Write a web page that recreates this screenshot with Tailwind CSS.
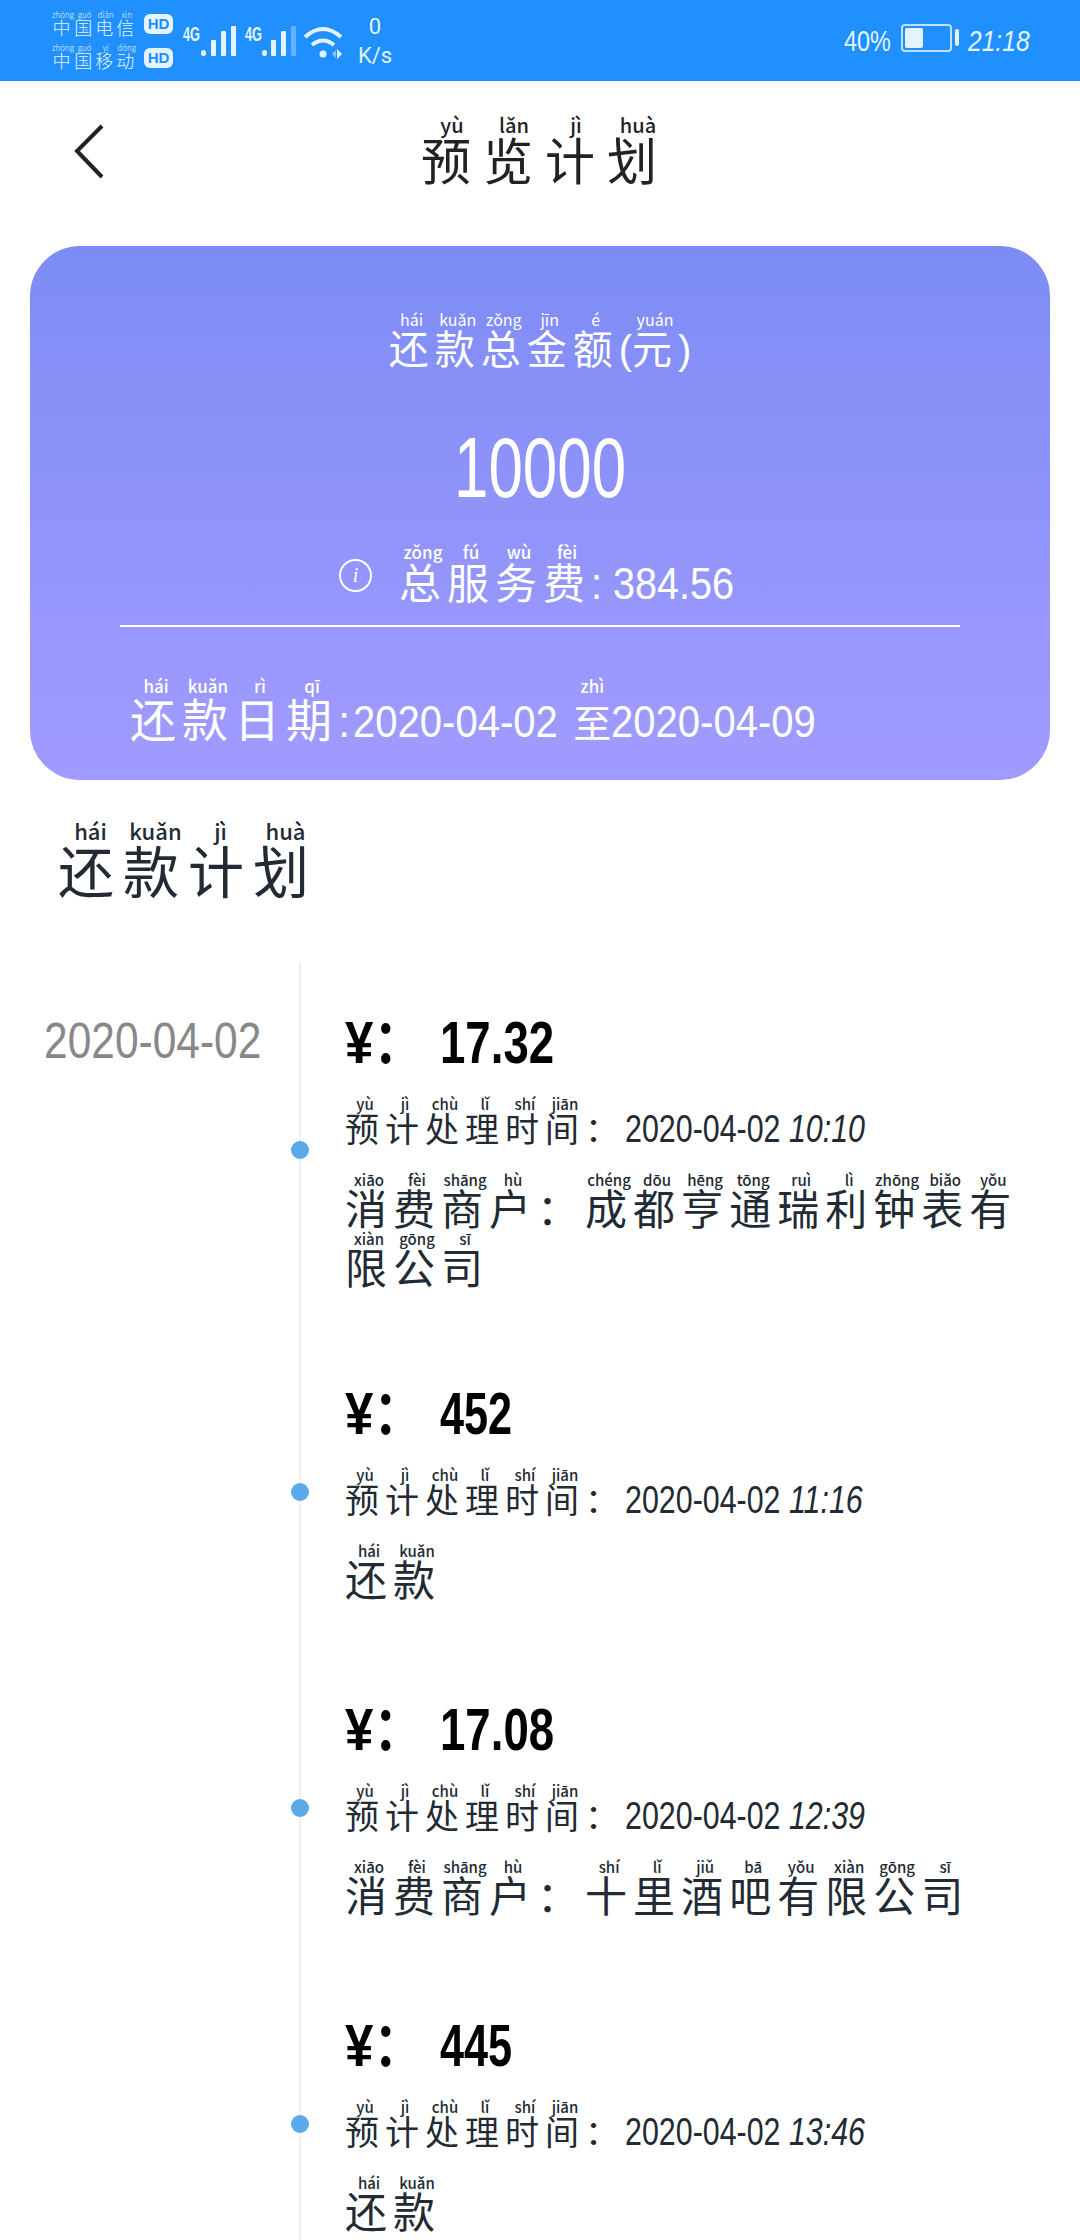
<!DOCTYPE html>
<html lang="zh-CN">
<head>
    <meta charset="UTF-8">
    <meta name="viewport" content="width=device-width, initial-scale=1.0">
    <title>预览计划</title>
    <script src="https://cdn.jsdelivr.net/npm/@tailwindcss/browser@4"></script>
</head>
<body class="bg-white w-[1080px] h-[2240px] overflow-hidden font-['Noto_Sans_CJK_SC','Liberation_Sans',sans-serif]">
    <!-- Status bar -->
    <div class="h-[81px] bg-[#2090ff] flex items-center text-[#e3f3ff] pl-[52px] pr-[50px]">
        <div class="flex flex-col gap-[5px] w-[92px] font-light">
            <div class="text-[18px] leading-[28px] tracking-[3px] h-[28px] [&_rt]:text-[8px] [&_rt]:tracking-normal"><ruby>中<rt>zhōng</rt></ruby><ruby>国<rt>guó</rt></ruby><ruby>电<rt>diàn</rt></ruby><ruby>信<rt>xìn</rt></ruby></div>
            <div class="text-[18px] leading-[28px] tracking-[3px] h-[28px] [&_rt]:text-[8px] [&_rt]:tracking-normal"><ruby>中<rt>zhōng</rt></ruby><ruby>国<rt>guó</rt></ruby><ruby>移<rt>yí</rt></ruby><ruby>动<rt>dòng</rt></ruby></div>
        </div>
        <div class="flex flex-col gap-[14px] w-[29px]">
            <span class="h-[20px] rounded-[6px] bg-[#e3f3ff] text-[#2090ff] text-[15px] leading-[20px] font-bold text-center font-['Liberation_Sans',sans-serif]">HD</span>
            <span class="h-[20px] rounded-[6px] bg-[#e3f3ff] text-[#2090ff] text-[15px] leading-[20px] font-bold text-center font-['Liberation_Sans',sans-serif]">HD</span>
        </div>
        <svg width="170" height="60" viewBox="0 0 170 60" fill="#e3f3ff" class="ml-[5px]">
            <text x="5" y="30" font-family="Liberation Sans" font-size="21" font-weight="700" textLength="17" lengthAdjust="spacingAndGlyphs">4G</text>
            <rect x="23" y="39" width="5" height="6" rx="2.5"/><rect x="33" y="29" width="5" height="16" rx="1"/><rect x="43" y="20" width="5" height="25" rx="1"/><rect x="53" y="15" width="5" height="30" rx="1"/>
            <text x="67" y="30" font-family="Liberation Sans" font-size="21" font-weight="700" textLength="17" lengthAdjust="spacingAndGlyphs">4G</text>
            <rect x="84" y="39" width="5" height="6" rx="2.5"/><rect x="93" y="29" width="5" height="16" rx="1"/><rect x="103" y="20" width="5" height="25" rx="1"/><rect x="113" y="15" width="5" height="30" rx="1" opacity=".35"/>
            <g fill="none" stroke="#e3f3ff" stroke-width="4"><path d="M127 26q18-16 36 0"/><path d="M134 34q11-9 22 0"/></g>
            <circle cx="145" cy="43" r="3.5"/><path d="M154 43l4-4v8z" opacity=".5"/><path d="M159 38l5 5-5 5z"/>
        </svg>
        <div class="w-[50px] ml-[2px] text-center text-[22px] leading-[29px] font-['Roboto',sans-serif]">0<br><span class="whitespace-nowrap">K/s</span></div>
        <div class="ml-auto flex items-center font-['Liberation_Sans',sans-serif] text-[30px]">
            <span class="inline-block w-[47px] origin-left scale-x-[.78] whitespace-nowrap">40%</span>
            <span class="ml-[10px] w-[51px] h-[28px] rounded-[4px] border-2 border-[#bfe0ff] p-[2px] -mt-[6px]"><span class="block w-[18px] h-full bg-[#e3f3ff] rounded-[2px]"></span></span>
            <span class="ml-[3px] w-[4px] h-[17px] rounded-[2px] bg-[#e3f3ff] -mt-[6px]"></span>
            <span class="ml-[9px] inline-block w-[62px] origin-left scale-x-[.82] italic whitespace-nowrap">21:18</span>
        </div>
    </div>

    <!-- Nav -->
    <div class="h-[165px] relative flex justify-center">
        <svg width="30" height="56" viewBox="0 0 30 56" fill="none" stroke="#222" stroke-width="4" class="absolute left-[74px] top-[43px]"><path d="M28 2L3 27l25 26"/></svg>
        <div class="pt-[40px] pl-[10px] text-[50px] leading-[74px] tracking-[12px] text-[#222] [&_rt]:text-[20px] [&_rt]:tracking-normal [&_rt]:font-medium"><ruby>预<rt>yù</rt></ruby><ruby>览<rt>lǎn</rt></ruby><ruby>计<rt>jì</rt></ruby><ruby>划<rt>huà</rt></ruby></div>
    </div>

    <!-- Summary card -->
    <div class="mx-[30px] h-[534px] rounded-[50px] bg-gradient-to-b from-[#7d8cf5] to-[#a29bff] text-white flex flex-col items-center">
        <div class="mt-[65px] text-[40px] leading-[56px] tracking-[6px] [&_rt]:text-[16px] [&_rt]:tracking-normal"><ruby>还<rt>hái</rt></ruby><ruby>款<rt>kuǎn</rt></ruby><ruby>总<rt>zǒng</rt></ruby><ruby>金<rt>jīn</rt></ruby><ruby>额<rt>é</rt></ruby><span class="font-['Liberation_Sans',sans-serif] tracking-normal">(</span><ruby>元<rt>yuán</rt></ruby><span class="font-['Liberation_Sans',sans-serif] tracking-normal">)</span></div>
        <div class="mt-[46px] w-[172px] text-[86px] leading-[86px] origin-left scale-x-[.72] font-['Liberation_Sans',sans-serif]">10000</div>
        <div class="mt-[34px] flex items-end">
            <span class="w-[33px] h-[33px] mb-[22px] mr-[27px] rounded-full border-2 border-white text-[20px] leading-[28px] text-center italic font-['Liberation_Serif',serif]">i</span>
            <div class="text-[42px] leading-[60px] tracking-[6px] whitespace-nowrap [&_rt]:text-[17px] [&_rt]:tracking-normal [&_rt]:font-medium"><ruby>总<rt>zǒng</rt></ruby><ruby>服<rt>fú</rt></ruby><ruby>务<rt>wù</rt></ruby><ruby>费<rt>fèi</rt></ruby><span class="inline-block w-[150px] origin-left scale-x-[.9] text-[44px] tracking-normal font-['Liberation_Sans',sans-serif]">: 384.56</span></div>
        </div>
        <div class="w-[840px] h-[2px] bg-white mt-[11px]"></div>
        <div class="w-[840px] mt-[51px] pl-[10px] text-[46px] leading-[60px] tracking-[6px] whitespace-nowrap [&_rt]:text-[17px] [&_rt]:tracking-normal [&_rt]:font-medium"><ruby>还<rt>hái</rt></ruby><ruby>款<rt>kuǎn</rt></ruby><ruby>日<rt>rì</rt></ruby><ruby>期<rt>qī</rt></ruby><span class="font-['Liberation_Sans',sans-serif] tracking-normal text-[44px]">:</span><span class="ml-[3px] inline-block w-[220px] origin-left scale-x-[.91] text-[44px] tracking-normal font-['Liberation_Sans',sans-serif]">2020-04-02</span><ruby class="text-[38px] tracking-normal">至<rt>zhì</rt></ruby><span class="inline-block w-[205px] origin-left scale-x-[.91] text-[44px] tracking-normal font-['Liberation_Sans',sans-serif]">2020-04-09</span></div>
    </div>

    <!-- Heading -->
    <div class="mt-[40px] pl-[58px] text-[56px] leading-[80px] tracking-[9px] text-[#222a33] [&_rt]:text-[22px] [&_rt]:tracking-normal [&_rt]:font-medium"><ruby>还<rt>hái</rt></ruby><ruby>款<rt>kuǎn</rt></ruby><ruby>计<rt>jì</rt></ruby><ruby>划<rt>huà</rt></ruby></div>

    <!-- Timeline -->
    <div class="mt-[53px] flex">
        <div class="w-[299px] pl-[44px] pt-[49px] text-[50px] leading-[60px] text-[#888] font-['Liberation_Sans',sans-serif]"><span class="inline-block w-[217px] origin-left scale-x-[.85] whitespace-nowrap">2020-04-02</span></div>
        <div class="relative flex-1 border-l-2 border-[#eef0f2] pl-[44px] pr-[30px] text-[#222a33] [&_rt]:text-[15px] [&_rt]:tracking-normal [&_rt]:font-medium">
            <div class="pt-[51px] h-[371px] relative">
                <span class="absolute -left-[54px] top-[179px] w-[18px] h-[18px] rounded-full bg-[#5aa9ea]"></span>
                <div class="flex items-baseline text-[60px] leading-[60px] font-bold text-black font-['Liberation_Sans',sans-serif]"><span class="w-[95px] origin-left scale-x-[.85] whitespace-nowrap">¥：</span><span class="w-[114px] origin-left scale-x-[.76] whitespace-nowrap">17.32</span></div>
                <div class="mt-[23px] text-[34px] leading-[50px] tracking-[6px] whitespace-nowrap"><ruby>预<rt>yù</rt></ruby><ruby>计<rt>jì</rt></ruby><ruby>处<rt>chù</rt></ruby><ruby>理<rt>lǐ</rt></ruby><ruby>时<rt>shí</rt></ruby><ruby>间<rt>jiān</rt></ruby>：<span class="inline-block w-[241px] origin-left scale-x-[.8] font-['Liberation_Sans',sans-serif] tracking-normal text-[38px]">2020-04-02 <i>10:10</i></span></div>
                <div class="mt-[18px] text-[42px] leading-[56px] tracking-[6px]"><ruby>消<rt>xiāo</rt></ruby><ruby>费<rt>fèi</rt></ruby><ruby>商<rt>shāng</rt></ruby><ruby>户<rt>hù</rt></ruby>：<ruby>成<rt>chéng</rt></ruby><ruby>都<rt>dōu</rt></ruby><ruby>亨<rt>hēng</rt></ruby><ruby>通<rt>tōng</rt></ruby><ruby>瑞<rt>ruì</rt></ruby><ruby>利<rt>lì</rt></ruby><ruby>钟<rt>zhōng</rt></ruby><ruby>表<rt>biǎo</rt></ruby><ruby>有<rt>yǒu</rt></ruby><ruby>限<rt>xiàn</rt></ruby><ruby>公<rt>gōng</rt></ruby><ruby>司<rt>sī</rt></ruby></div>
            </div>
            <div class="pt-[51px] h-[316px] relative">
                <span class="absolute -left-[54px] top-[150px] w-[18px] h-[18px] rounded-full bg-[#5aa9ea]"></span>
                <div class="flex items-baseline text-[60px] leading-[60px] font-bold text-black font-['Liberation_Sans',sans-serif]"><span class="w-[95px] origin-left scale-x-[.85] whitespace-nowrap">¥：</span><span class="w-[72px] origin-left scale-x-[.72] whitespace-nowrap">452</span></div>
                <div class="mt-[23px] text-[34px] leading-[50px] tracking-[6px] whitespace-nowrap"><ruby>预<rt>yù</rt></ruby><ruby>计<rt>jì</rt></ruby><ruby>处<rt>chù</rt></ruby><ruby>理<rt>lǐ</rt></ruby><ruby>时<rt>shí</rt></ruby><ruby>间<rt>jiān</rt></ruby>：<span class="inline-block w-[241px] origin-left scale-x-[.8] font-['Liberation_Sans',sans-serif] tracking-normal text-[38px]">2020-04-02 <i>11:16</i></span></div>
                <div class="mt-[18px] text-[42px] leading-[56px] tracking-[6px]"><ruby>还<rt>hái</rt></ruby><ruby>款<rt>kuǎn</rt></ruby></div>
            </div>
            <div class="pt-[51px] h-[316px] relative">
                <span class="absolute -left-[54px] top-[150px] w-[18px] h-[18px] rounded-full bg-[#5aa9ea]"></span>
                <div class="flex items-baseline text-[60px] leading-[60px] font-bold text-black font-['Liberation_Sans',sans-serif]"><span class="w-[95px] origin-left scale-x-[.85] whitespace-nowrap">¥：</span><span class="w-[114px] origin-left scale-x-[.76] whitespace-nowrap">17.08</span></div>
                <div class="mt-[23px] text-[34px] leading-[50px] tracking-[6px] whitespace-nowrap"><ruby>预<rt>yù</rt></ruby><ruby>计<rt>jì</rt></ruby><ruby>处<rt>chù</rt></ruby><ruby>理<rt>lǐ</rt></ruby><ruby>时<rt>shí</rt></ruby><ruby>间<rt>jiān</rt></ruby>：<span class="inline-block w-[241px] origin-left scale-x-[.8] font-['Liberation_Sans',sans-serif] tracking-normal text-[38px]">2020-04-02 <i>12:39</i></span></div>
                <div class="mt-[18px] text-[42px] leading-[56px] tracking-[6px]"><ruby>消<rt>xiāo</rt></ruby><ruby>费<rt>fèi</rt></ruby><ruby>商<rt>shāng</rt></ruby><ruby>户<rt>hù</rt></ruby>：<ruby>十<rt>shí</rt></ruby><ruby>里<rt>lǐ</rt></ruby><ruby>酒<rt>jiǔ</rt></ruby><ruby>吧<rt>bā</rt></ruby><ruby>有<rt>yǒu</rt></ruby><ruby>限<rt>xiàn</rt></ruby><ruby>公<rt>gōng</rt></ruby><ruby>司<rt>sī</rt></ruby></div>
            </div>
            <div class="pt-[51px] h-[316px] relative">
                <span class="absolute -left-[54px] top-[150px] w-[18px] h-[18px] rounded-full bg-[#5aa9ea]"></span>
                <div class="flex items-baseline text-[60px] leading-[60px] font-bold text-black font-['Liberation_Sans',sans-serif]"><span class="w-[95px] origin-left scale-x-[.85] whitespace-nowrap">¥：</span><span class="w-[72px] origin-left scale-x-[.72] whitespace-nowrap">445</span></div>
                <div class="mt-[23px] text-[34px] leading-[50px] tracking-[6px] whitespace-nowrap"><ruby>预<rt>yù</rt></ruby><ruby>计<rt>jì</rt></ruby><ruby>处<rt>chù</rt></ruby><ruby>理<rt>lǐ</rt></ruby><ruby>时<rt>shí</rt></ruby><ruby>间<rt>jiān</rt></ruby>：<span class="inline-block w-[241px] origin-left scale-x-[.8] font-['Liberation_Sans',sans-serif] tracking-normal text-[38px]">2020-04-02 <i>13:46</i></span></div>
                <div class="mt-[18px] text-[42px] leading-[56px] tracking-[6px]"><ruby>还<rt>hái</rt></ruby><ruby>款<rt>kuǎn</rt></ruby></div>
            </div>
        </div>
    </div>
</body>
</html>
